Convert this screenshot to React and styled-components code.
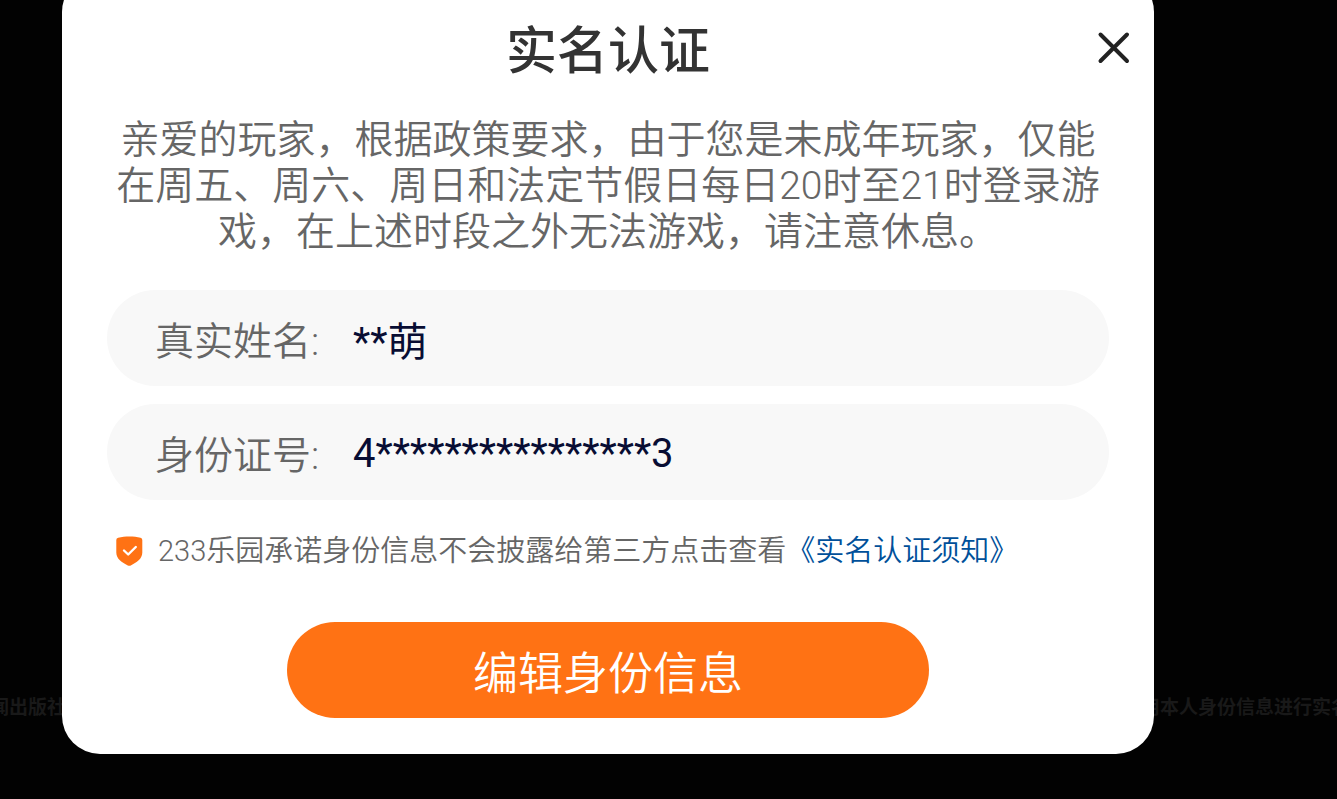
import React, { useState } from 'react';
import styled, { createGlobalStyle } from 'styled-components';

const GlobalStyle = createGlobalStyle`
  * {
    box-sizing: border-box;
  }

  body {
    margin: 0;
    background-color: #020202;
    font-family: Roboto, "Noto Sans CJK SC", sans-serif;
    font-weight: 350;
  }

  button,
  input {
    font-family: inherit;
    font-weight: inherit;
  }
`;

const Page = styled.div`
  position: relative;
  height: 100vh;
  overflow: hidden;
  display: flex;
  align-items: flex-end;
  padding: 0 183px 45px 62px;
`;

const Backdrop = styled.div`
  position: absolute;
  left: -10px;
  right: -13px;
  bottom: 77px;
  display: flex;
  justify-content: space-between;
  white-space: nowrap;
  font-size: 19px;
  line-height: 28px;
  font-weight: bold;
  color: #191919;
`;

const Modal = styled.section`
  position: relative;
  flex: 1;
  padding: 48px 45px 36px;
  background-color: #fff;
  border-radius: 38px;
`;

const Title = styled.h1`
  margin: 0;
  font-size: 51px;
  line-height: 60px;
  font-weight: 500;
  text-align: center;
  color: #333;
`;

const CloseButton = styled.button`
  position: absolute;
  top: 54px;
  right: 20px;
  width: 40px;
  height: 40px;
  padding: 0;
  border: none;
  background: none;
  cursor: pointer;

  svg {
    display: block;
  }
`;

const Message = styled.p`
  margin: 35px 0;
  font-size: 39px;
  line-height: 46px;
  text-align: center;
  color: #666;
`;

const Form = styled.form`
  display: flex;
  flex-direction: column;
  gap: 18px;
`;

const Field = styled.label`
  display: flex;
  align-items: center;
  height: 96px;
  padding: 0 48px;
  border-radius: 48px;
  background-color: #f8f8f8;
  font-size: 39px;
  color: #666;
`;

const FieldName = styled.span`
  width: 198px;
`;

const Input = styled.input`
  flex: 1;
  min-width: 0;
  padding: 2px 0 0;
  border: none;
  outline: none;
  background: none;
  font-size: 40px;
  font-weight: 400;
  color: #080d33;
`;

const Promise = styled.div`
  display: flex;
  align-items: center;
  margin-top: 14px;
  padding-left: 9px;
  font-size: 29px;
  line-height: 38px;
  color: #666;

  svg {
    margin-right: 15px;
  }
`;

const Link = styled.a`
  color: #00509a;
  text-decoration: none;
`;

const SubmitButton = styled.button`
  align-self: center;
  width: 642px;
  max-width: 100%;
  height: 96px;
  margin-top: 34px;
  border: none;
  border-radius: 48px;
  background-color: #ff7214;
  font-size: 45px;
  color: #fff;
  cursor: pointer;
`;

const CloseIcon = () => (
  <svg width="40" height="40" viewBox="0 0 40 40" fill="none" stroke="#222" strokeWidth="4" strokeLinecap="round">
    <path d="M6.5 6.5L33 33M33 6.5L6.5 33" />
  </svg>
);

const ShieldIcon = () => (
  <svg width="27" height="30" viewBox="0 0 27 30" fill="none">
    <path
      d="M2.2 1.8C9 .1 18 .1 24.5 1.8Q26.3 2.2 26.3 4V16.5C26.3 23 20.5 26.5 14.8 29.4Q13.3 30 11.8 29.4C6 26.5 .3 23 .3 16.5V4Q.3 2.2 2.2 1.8Z"
      fill="#ff7214"
    />
    <path d="M8 14.5L12.2 18.5L19.8 11" stroke="#fff" strokeWidth="2.4" strokeLinecap="round" strokeLinejoin="round" />
  </svg>
);

const App = () => {
  const [formData, setFormData] = useState({
    realName: '**萌',
    idNumber: '4****************3'
  });

  const handleChange = (e) => {
    const { name, value } = e.target;
    setFormData({ ...formData, [name]: value });
  };

  const handleSubmit = (e) => {
    e.preventDefault();
  };

  return (
    <Page>
      <GlobalStyle />
      <Backdrop>
        <span>闻出版社</span>
        <span>用本人身份信息进行实名</span>
      </Backdrop>
      <Modal>
        <Title>实名认证</Title>
        <CloseButton type="button" aria-label="关闭">
          <CloseIcon />
        </CloseButton>
        <Message>
          亲爱的玩家，根据政策要求，由于您是未成年玩家，仅能在周五、周六、周日和法定节假日每日20时至21时登录游戏，在上述时段之外无法游戏，请注意休息。
        </Message>
        <Form onSubmit={handleSubmit}>
          <Field>
            <FieldName>真实姓名:</FieldName>
            <Input type="text" name="realName" value={formData.realName} onChange={handleChange} />
          </Field>
          <Field>
            <FieldName>身份证号:</FieldName>
            <Input type="text" name="idNumber" value={formData.idNumber} onChange={handleChange} />
          </Field>
          <Promise>
            <ShieldIcon />
            <span>233乐园承诺身份信息不会披露给第三方点击查看</span>
            <Link href="#notice">《实名认证须知》</Link>
          </Promise>
          <SubmitButton type="submit">编辑身份信息</SubmitButton>
        </Form>
      </Modal>
    </Page>
  );
};

export default App;
